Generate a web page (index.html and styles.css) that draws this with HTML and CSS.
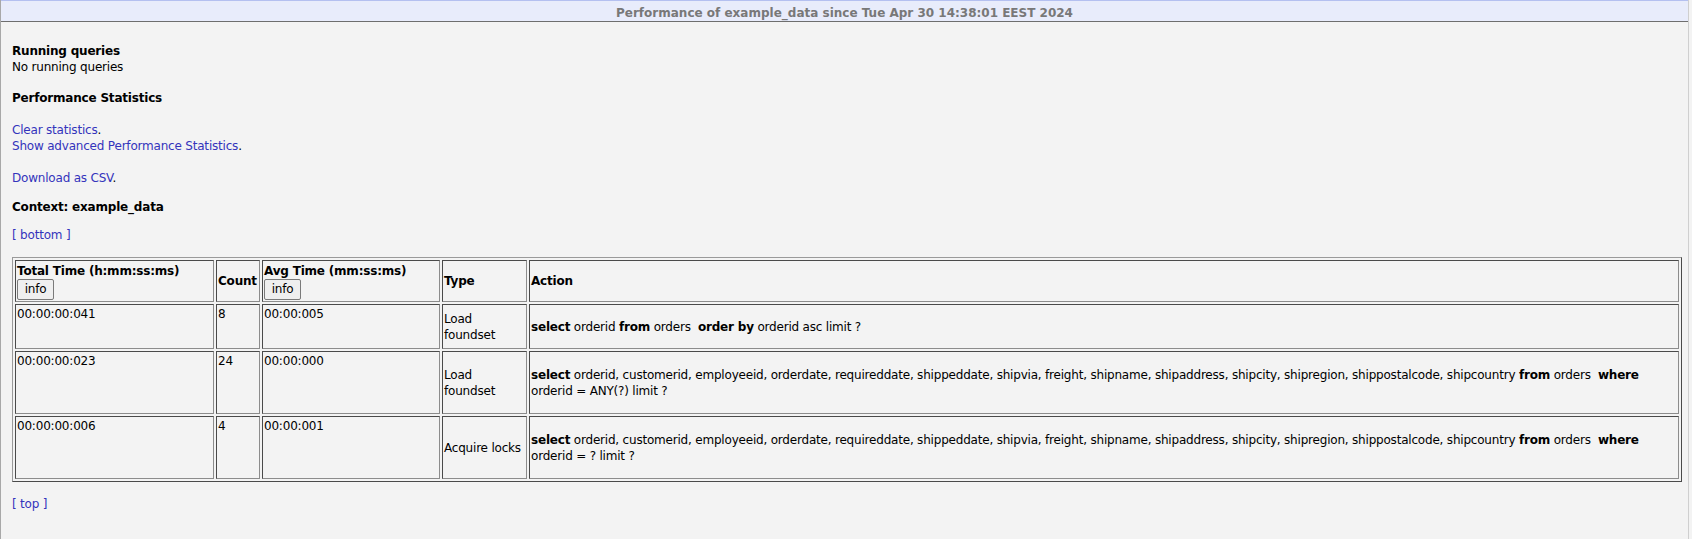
FILE: index.html
```html
<!DOCTYPE html>
<html>
<head>
<meta charset="utf-8">
<title>Performance of example_data</title>
<link rel="stylesheet" href="styles.css">
</head>
<body>
<div class="frame">
  <div class="titlebar">Performance of example_data since Tue Apr 30 14:38:01 EEST 2024</div>
  <div class="content">
    <div class="heading run">Running queries</div>
    <div class="line">No running queries</div>
    <div class="heading stats">Performance Statistics</div>
    <div class="links"><a href="#">Clear statistics</a>.<br><a href="#">Show advanced Performance Statistics</a>.</div>
    <div class="links csv"><a href="#">Download as CSV</a>.</div>
    <div class="heading ctx">Context: example_data</div>
    <div class="nav" id="top"><a href="#bottom">[ bottom ]</a></div>
    <table class="perf">
      <thead>
        <tr class="head-row">
          <th class="c-total">Total Time (h:mm:ss:ms)<br><button class="info-btn" type="button">info</button></th>
          <th class="c-count">Count</th>
          <th class="c-avg">Avg Time (mm:ss:ms)<br><button class="info-btn" type="button">info</button></th>
          <th class="c-type">Type</th>
          <th class="c-action">Action</th>
        </tr>
      </thead>
      <tbody>
        <tr class="row-a">
          <td class="num">00:00:00:041</td>
          <td class="num">8</td>
          <td class="num">00:00:005</td>
          <td class="type">Load<br>foundset</td>
          <td class="action"><b>select</b> orderid <b>from</b> orders&nbsp; <b>order by</b> orderid asc limit ?</td>
        </tr>
        <tr class="row-b">
          <td class="num">00:00:00:023</td>
          <td class="num">24</td>
          <td class="num">00:00:000</td>
          <td class="type">Load<br>foundset</td>
          <td class="action"><b>select</b> orderid, customerid, employeeid, orderdate, requireddate, shippeddate, shipvia, freight, shipname, shipaddress, shipcity, shipregion, shippostalcode, shipcountry <b>from</b> orders&nbsp; <b>where</b><br>orderid = ANY(?) limit ?</td>
        </tr>
        <tr class="row-c">
          <td class="num">00:00:00:006</td>
          <td class="num">4</td>
          <td class="num">00:00:001</td>
          <td class="type">Acquire locks</td>
          <td class="action"><b>select</b> orderid, customerid, employeeid, orderdate, requireddate, shippeddate, shipvia, freight, shipname, shipaddress, shipcity, shipregion, shippostalcode, shipcountry <b>from</b> orders&nbsp; <b>where</b><br>orderid = ? limit ?</td>
        </tr>
      </tbody>
    </table>
    <div class="nav top" id="bottom"><a href="#top">[ top ]</a></div>
  </div>
</div>
</body>
</html>
```
FILE: styles.css
```css
html, body {
  margin: 0;
  padding: 0;
  background: #f3f3f3;
}

body {
  font-family: "DejaVu Sans", Verdana, sans-serif;
  font-size: 12px;
  line-height: 16px;
  color: #000;
  letter-spacing: -0.2px;
}

.frame {
  width: 1689px;
  box-sizing: border-box;
  min-height: 539px;
  border-left: 1px solid #a8a8a8;
  border-right: 1px solid #cfcfcf;
  background: #f3f3f3;
}

.titlebar {
  height: 16px;
  padding-top: 4px;
  border-top: 1px solid #b4c0f0;
  border-bottom: 1px solid #6e6e6e;
  background: #e8ecfb;
  text-align: center;
  font-weight: bold;
  color: #787878;
  letter-spacing: 0;
  white-space: nowrap;
}

.content {
  padding: 21px 6px 0 11px;
}

.heading {
  font-weight: bold;
}

.stats {
  margin-top: 15px;
}

.links {
  margin-top: 16px;
}

a {
  color: #3434bc;
  text-decoration: none;
}

.ctx {
  margin-top: 13px;
}

.nav {
  margin-top: 12px;
}

.nav.top {
  margin-top: 14px;
}

.perf {
  margin-top: 14px;
  width: 100%;
  table-layout: fixed;
  border-collapse: separate;
  border-spacing: 2px;
  border: 1px solid;
  border-color: #9a9a9a #4a4a4a #4a4a4a #9a9a9a;
}

.perf th,
.perf td {
  box-sizing: border-box;
  border: 1px solid;
  border-color: #4a4a4a #8c8c8c #8c8c8c #4a4a4a;
  padding: 1px;
  text-align: left;
}

.perf th {
  font-weight: bold;
  vertical-align: middle;
}

.c-total { width: 199px; }
.c-count { width: 44px; }
.c-avg { width: 178px; }
.c-type { width: 85px; }

.head-row { height: 42px; }
.row-a { height: 45px; }
.row-b { height: 63px; }
.row-c { height: 63px; }

.perf td.num {
  vertical-align: top;
}

.perf td.type,
.perf td.action {
  vertical-align: middle;
}

.info-btn {
  display: inline-block;
  box-sizing: border-box;
  width: 37px;
  height: 21px;
  margin: 0;
  padding: 0 5px;
  font-family: "DejaVu Sans", Verdana, sans-serif;
  font-size: 12px;
  line-height: 17px;
  letter-spacing: -0.2px;
  color: #000;
  background: #efefef;
  border: 1px solid #7a7a7a;
  border-radius: 2px;
  vertical-align: top;
}
```
